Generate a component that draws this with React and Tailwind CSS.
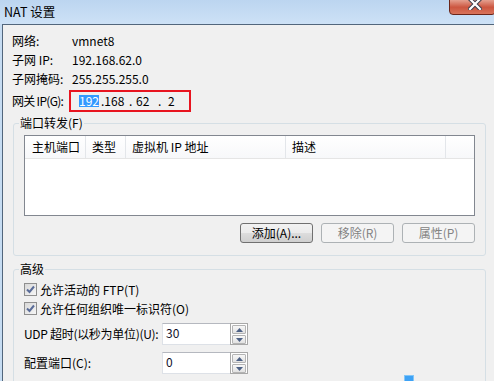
import React from "react";

function Spin() {
  const btn =
    "h-[9px] w-full border border-[#b4b4b4] rounded-[1px] bg-[linear-gradient(#f7f7f7,#e2e2e2)] flex items-center justify-center";
  return (
    <div className="w-[18px] shrink-0 h-full border border-[#a8a8a8] bg-white flex flex-col px-[1px] pt-[1px] gap-[1px]">
      <div className={btn}>
        <svg width="7" height="4" viewBox="0 0 7 4">
          <path d="M0 4 L3.5 0 L7 4 Z" fill="#4d6185" />
        </svg>
      </div>
      <div className={btn}>
        <svg width="7" height="4" viewBox="0 0 7 4">
          <path d="M0 0 L7 0 L3.5 4 Z" fill="#4d6185" />
        </svg>
      </div>
    </div>
  );
}

function NumInput({ value }) {
  return (
    <div className="flex w-[86px] shrink-0 h-[22px]">
      <div className="w-[68px] shrink-0 h-full bg-white border border-r-0 border-[#dde1e7] border-t-[#b5b8bf] pl-[3px] leading-[18px] text-[#10102a]">
        {value}
      </div>
      <Spin />
    </div>
  );
}

function Check({ label }) {
  return (
    <div className="h-[19px] flex items-center pl-[10px]">
      <div className="w-[13px] h-[13px] shrink-0 border border-[#8f8f8f] bg-[linear-gradient(135deg,#d8d8d8,#f6f6f6)] flex items-center justify-center">
        <svg width="9" height="9" viewBox="0 0 9 9">
          <path d="M1 4.5 L3.5 7 L8 1.5" fill="none" stroke="#5a6c98" strokeWidth="2" />
        </svg>
      </div>
      <span className="ml-[3px]">{label}</span>
    </div>
  );
}

export default function App() {
  const col = "h-full shrink-0 flex items-center border-r border-[#e3e6ea]";
  return (
    <div className="relative w-[494px] h-[381px] overflow-hidden whitespace-nowrap flex flex-col bg-[#c6dcf2] text-[12px] leading-[16px] text-black font-['Noto_Sans_CJK_SC',sans-serif]">
      {/* title bar */}
      <div className="h-[24px] shrink-0 flex items-center pl-[4px] bg-[linear-gradient(#bcd5f0,#cde1f6)]">
        <span className="text-[12.5px]">NAT 设置</span>
      </div>
      {/* close button */}
      <div className="absolute left-[449px] top-[-2px] w-[47px] h-[17px] rounded-b-[4px] border border-[#6a2519] bg-[linear-gradient(#e8aa9a,#cc5640_55%,#d8735a)]">
        <svg className="absolute left-[18px] top-[0px]" width="14" height="11" viewBox="0 0 14 11">
          <path d="M2 0 L12 10 M12 0 L2 10" stroke="#3d3d4a" strokeWidth="4.2" strokeLinecap="square" />
          <path d="M2 0 L12 10 M12 0 L2 10" stroke="#ffffff" strokeWidth="2.2" strokeLinecap="square" />
        </svg>
      </div>

      <div className="flex-1 flex">
        <div className="w-[2px] shrink-0 bg-[#c6dcf2]" />
        <div className="flex-1 bg-[#f0f0f0] border-l border-t border-[#52667c] flex flex-col pt-[6px]">
          {/* info rows */}
          <div className="pl-[9px] flex flex-col">
            <div className="h-[19px] flex items-center">
              <span className="w-[60px] shrink-0">网络:</span>
              <span>vmnet8</span>
            </div>
            <div className="h-[19px] flex items-center">
              <span className="w-[60px] shrink-0">子网 IP:</span>
              <span>192.168.62.0</span>
            </div>
            <div className="h-[19px] flex items-center">
              <span className="w-[60px] shrink-0">子网掩码:</span>
              <span>255.255.255.0</span>
            </div>
            <div className="h-[22px] mt-[2px] flex items-center">
              <span className="w-[57px] shrink-0 tracking-[-0.7px]">网关 IP(G):</span>
              <div className="w-[122px] shrink-0 h-[22px] border-2 border-[#e8141f] flex items-center pl-[8px]">
                <span className="h-[12px] w-[20px] shrink-0 bg-[#3399ff] text-white leading-[12px] flex items-center justify-center">
                  192
                </span>
                <span className="w-[2px] shrink-0" />
                <span className="w-[28px] shrink-0">.168</span>
                <span className="w-[7px] shrink-0">.</span>
                <span className="w-[22px] shrink-0">62</span>
                <span className="w-[10px] shrink-0">.</span>
                <span>2</span>
              </div>
            </div>
          </div>

          {/* port forwarding group */}
          <fieldset className="mt-[3px] ml-[10px] w-[473px] border border-[#d5dfe5] rounded-[3px] p-0 pb-[12px]">
            <legend className="ml-[5px] px-[1px] leading-[16px]">端口转发(F)</legend>
            <div className="mt-[4px] ml-[10px] w-[451px] h-[81px] border border-[#828790] bg-white">
              <div className="h-[23px] flex border-b border-[#e5e5e5] bg-[linear-gradient(#ffffff,#f7f8fa)]">
                <div className={col + " w-[61px] pl-[7px]"}>主机端口</div>
                <div className={col + " w-[40px] pl-[6px]"}>类型</div>
                <div className={col + " w-[160px] pl-[6px]"}>虚拟机 IP 地址</div>
                <div className={col + " w-[160px] pl-[6px]"}>描述</div>
                <div className="flex-1" />
              </div>
            </div>
            <div className="mt-[7px] flex justify-end gap-[8px] pr-[10px]">
              <div className="w-[73px] h-[20px] rounded-[3px] border border-[#707070] bg-[linear-gradient(#f2f2f2_0%,#ebebeb_50%,#dddddd_51%,#cfcfcf_100%)] flex items-center justify-center leading-[14px]">
                添加(A)...
              </div>
              <div className="w-[73px] h-[20px] rounded-[3px] border border-[#adb2b5] bg-[#f4f4f4] text-[#838383] flex items-center justify-center leading-[14px]">
                移除(R)
              </div>
              <div className="w-[73px] h-[20px] rounded-[3px] border border-[#adb2b5] bg-[#f4f4f4] text-[#838383] flex items-center justify-center leading-[14px]">
                属性(P)
              </div>
            </div>
          </fieldset>

          {/* advanced group */}
          <fieldset className="mt-[6px] ml-[10px] w-[473px] h-[200px] shrink-0 border border-[#d5dfe5] rounded-[3px] p-0">
            <legend className="ml-[5px] px-[1px] leading-[14px]">高级</legend>
            <div className="mt-[4px] flex flex-col">
              <Check label="允许活动的 FTP(T)" />
              <Check label="允许任何组织唯一标识符(O)" />
              <div className="mt-[5px] h-[22px] flex items-center pl-[10px]">
                <span className="w-[138px] shrink-0 tracking-[-0.3px]">UDP 超时(以秒为单位)(U):</span>
                <NumInput value="30" />
              </div>
              <div className="mt-[7px] h-[22px] flex items-center pl-[10px]">
                <span className="w-[138px] shrink-0">配置端口(C):</span>
                <NumInput value="0" />
              </div>
            </div>
          </fieldset>
        </div>
      </div>

      {/* small blue marker at bottom */}
      <div className="absolute left-[404px] top-[375px] w-[10px] h-[8px] bg-[#3ea2f5] border border-[#82c6f8]" />
    </div>
  );
}
